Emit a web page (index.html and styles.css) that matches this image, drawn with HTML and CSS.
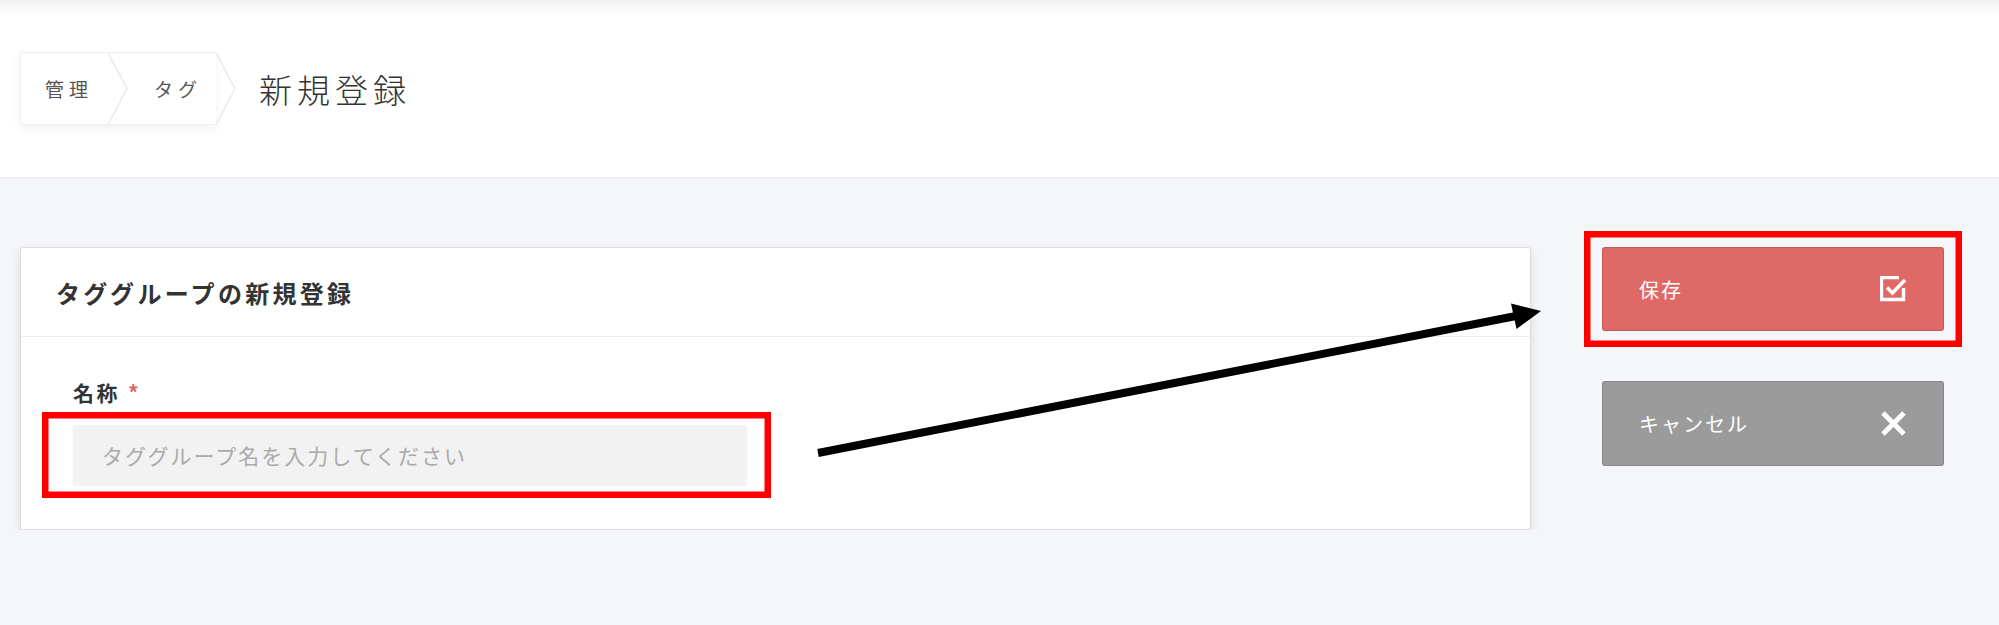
FILE: index.html
```html
<!DOCTYPE html>
<html lang="ja">

<head>
    <meta charset="UTF-8">
    <meta name="viewport" content="width=device-width, initial-scale=1.0">
    <title>タググループの新規登録</title>

    <link rel="stylesheet" href="styles.css">
</head>

<body>
    <header class="page-header">
        <nav class="breadcrumb">
            <span class="crumb">管理</span>
            <span class="crumb">タグ</span>
        </nav>
        <h1 class="page-title">新規登録</h1>
    </header>

    <main class="content">
        <section class="card">
            <div class="card-head">タググループの新規登録</div>
            <div class="card-body">
                <label class="field-label">名称<span class="required">*</span></label>
                <div class="field-input">タググループ名を入力してください</div>
            </div>
        </section>

        <aside class="actions">
            <button class="btn btn-save">
                <span>保存</span>
                <svg width="27" height="26" viewBox="0 0 27 26">
                    <path d="M19 1.5H1.5V23.5H23.5V12" fill="none" stroke="#fff" stroke-width="3.4" />
                    <path d="M7 11.5L12.5 17L25 4" fill="none" stroke="#fff" stroke-width="3.6" />
                </svg>
            </button>
            <button class="btn btn-cancel">
                <span>キャンセル</span>
                <svg width="27" height="27" viewBox="0 0 27 27">
                    <path d="M3 3L24 24M24 3L3 24" stroke="#fff" stroke-width="5" />
                </svg>
            </button>
        </aside>
    </main>

    <!-- 注釈 (赤枠と矢印) -->
    <svg class="annotations" width="1999" height="625" viewBox="0 0 1999 625">
        <rect x="45.25" y="415.25" width="722.5" height="79.5" fill="none" stroke="#ff0000" stroke-width="6.5" />
        <rect x="1587.25" y="234.25" width="371.5" height="109.5" fill="none" stroke="#ff0000" stroke-width="6.5" />
        <line x1="818" y1="453" x2="1516" y2="316" stroke="#000" stroke-width="8" />
        <polygon points="1541,311 1511,303.5 1516.5,329" fill="#000" />
    </svg>
</body>

</html>
```

FILE: styles.css
```css
body {
    margin: 0;
    background-color: #f5f6fa;
    font-family: "Noto Sans CJK JP", "Noto Sans", sans-serif;
    color: #333333;
}

.page-header {
    height: 177px;
    box-sizing: border-box;
    padding-left: 20px;

    display: flex;
    align-items: center;

    background: linear-gradient(#f2f2f2, #ffffff 14px);
    box-shadow: rgba(0, 0, 0, 0.05) 0 1px 3px;
}

/* パンくず */
.breadcrumb {
    display: flex;
    height: 73px;

    background-color: #ffffff;
    border: 1px solid #f0f0f0;
    border-right: none;
    box-sizing: border-box;
    box-shadow: rgba(0, 0, 0, 0.06) 0 3px 10px;
}

.crumb {
    position: relative;
    width: 87px;
    box-sizing: border-box;
    display: flex;
    align-items: center;
    padding-left: 24px;

    font-size: 19px;
    letter-spacing: 5px;
    color: #555555;
}

.crumb + .crumb {
    width: 108px;
    padding-left: 46px;
}

.crumb::before,
.crumb::after {
    content: "";
    position: absolute;
    right: -1px;
    height: 50%;
    border-right: 2px solid #ececec;
}

.crumb::before {
    top: 0;
    transform-origin: top;
    transform: skewX(28deg);
}

.crumb::after {
    bottom: 0;
    transform-origin: bottom;
    transform: skewX(-28deg);
}

.page-title {
    margin: 0 0 0 43px;
    font-size: 33px;
    font-weight: 300;
    letter-spacing: 5px;
    color: #333333;
}

/* 本体 */
.content {
    display: flex;
    align-items: flex-start;
    gap: 71px;
    padding: 70px 0 0 20px;
}

.card {
    width: 1511px;
    box-sizing: border-box;

    background-color: #ffffff;
    border: 1px solid #dddddd;
    border-radius: 3px;
    box-shadow:
        rgba(0, 0, 0, 0.12) 0 4px 10px;
}

.card-head {
    height: 88px;
    padding-left: 35px;
    display: flex;
    align-items: center;

    border-bottom: 1px solid #eeeeee;
    font-size: 24px;
    font-weight: bold;
    letter-spacing: 3.3px;
    color: #333333;
}

.card-body {
    padding: 30px 0 44px 52px;
}

.field-label {
    display: block;
    margin-bottom: 8px;
    font-size: 21px;
    font-weight: bold;
    letter-spacing: 2.5px;
    line-height: 50px;
}

.required {
    margin-left: 8px;
    color: #e06666;
}

/* 入力欄 (プレースホルダー表示) */
.field-input {
    width: 674px;
    height: 60px;
    box-sizing: border-box;
    padding-left: 29px;
    display: flex;
    align-items: center;

    background-color: #f2f2f2;
    border-radius: 2px;
    box-shadow: rgba(0, 0, 0, 0.06) 0 1px 2px;

    font-size: 21px;
    letter-spacing: 2px;
    color: #aaaaaa;
}

/* ボタン */
.actions {
    display: flex;
    flex-direction: column;
    gap: 50px;
}

.btn {
    width: 342px;
    height: 84px;
    padding: 0 36px;

    display: flex;
    align-items: center;
    justify-content: space-between;

    border: 1px solid rgba(0, 0, 0, 0.12);
    border-radius: 3px;
    color: #ffffff;
    font-family: inherit;
    font-size: 20px;
    letter-spacing: 2px;
}

.btn-save {
    background-color: #de6966;
}

.btn-cancel {
    height: 85px;
    background-color: #9b9b9b;
}

.annotations {
    position: absolute;
    left: 0;
    top: 0;
    pointer-events: none;
}
```
